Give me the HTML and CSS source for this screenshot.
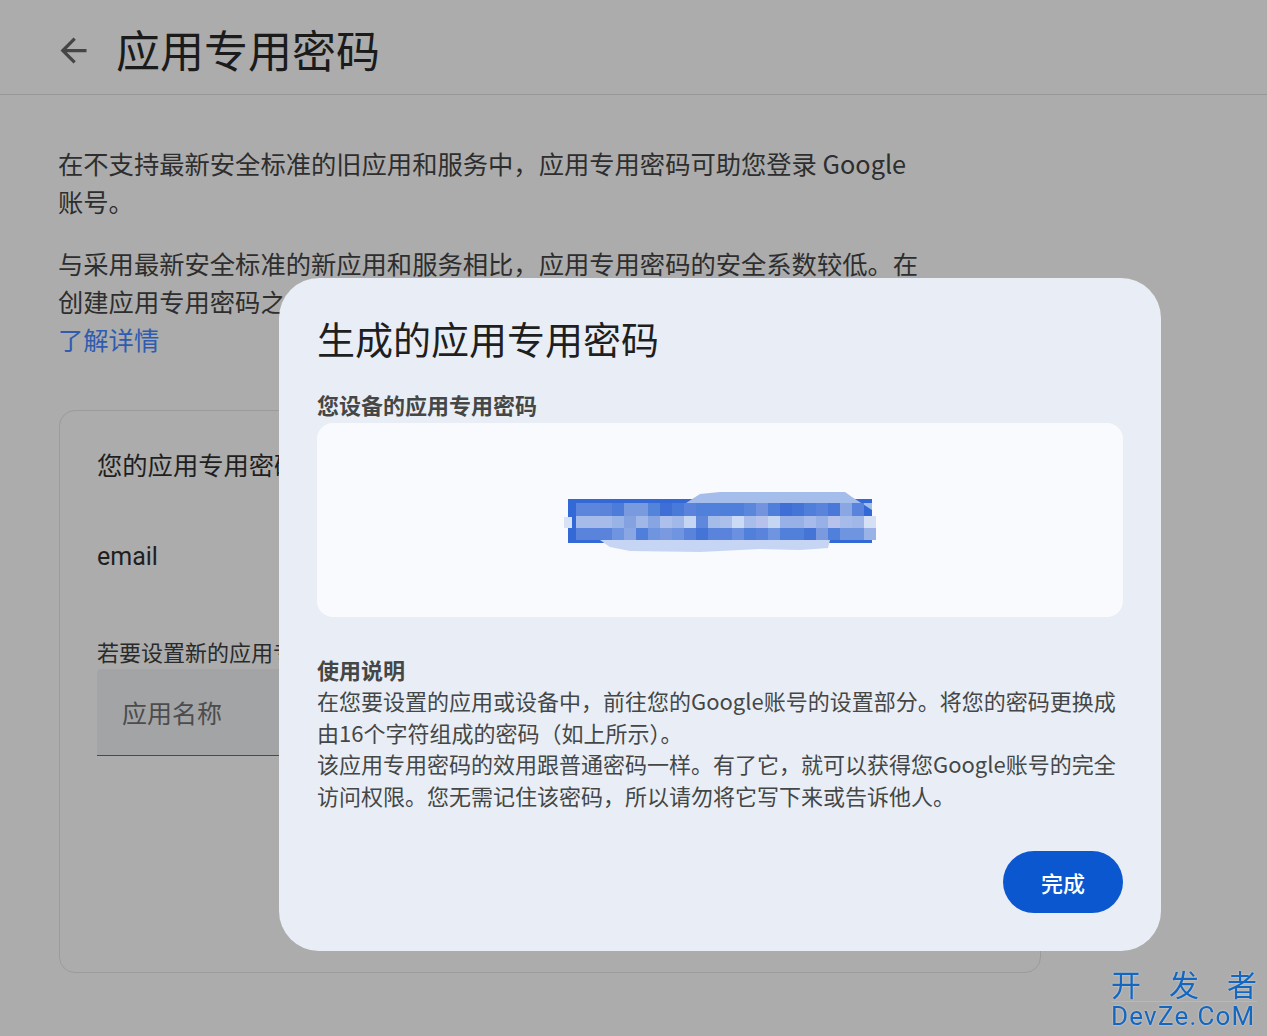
FILE: index.html
```html
<!DOCTYPE html>
<html lang="zh-CN">
<head>
<meta charset="utf-8">
<title>应用专用密码</title>
<link rel="stylesheet" href="styles.css">
</head>
<body>
<header class="topbar">
  <button class="back" aria-label="返回">
    <svg viewBox="0 0 24 24"><path d="M20 11H7.83l5.59-5.59L12 4l-8 8 8 8 1.41-1.41L7.83 13H20v-2z"/></svg>
  </button>
  <h1 class="page-title">应用专用密码</h1>
</header>

<main class="content">
  <p class="intro first">在不支持最新安全标准的旧应用和服务中，应用专用密码可助您登录 Google 账号。</p>
  <p class="intro">与采用最新安全标准的新应用和服务相比，应用专用密码的安全系数较低。在创建应用专用密码之前，请确认您的应用确实需要它才能登录。<a class="learn" href="#">了解详情</a></p>

  <section class="card">
    <h2 class="card-title">您的应用专用密码</h2>
    <div class="app-row">email</div>
    <p class="card-hint">若要设置新的应用专用密码，请在下方输入其名称。</p>
    <div class="field"><span class="placeholder">应用名称</span></div>
  </section>
</main>

<div class="dialog" role="dialog" aria-label="生成的应用专用密码">
  <h2 class="dialog-title">生成的应用专用密码</h2>
  <div class="dialog-sub">您设备的应用专用密码</div>
  <div class="secret">
    <svg class="secret-blur" width="324" height="68" viewBox="0 0 324 68">
      <rect x="10" y="13" width="304" height="44" fill="#3369d6"/>
      <polygon points="128,17 142,8 162,6 287,6 294,11 314,24 314,17" fill="#a5bdea"/>
      <polygon points="42,54 52,61 72,65 142,66 202,63 242,64 270,62 272,54" fill="#c6d5f3"/>
      <rect x="6" y="31" width="8" height="11" fill="#d8e2f6"/>
      <g>
        <rect x="18" y="17" width="12" height="13" fill="#5b86dc"/>
        <rect x="30" y="17" width="12" height="13" fill="#5b86dc"/>
        <rect x="42" y="17" width="12" height="13" fill="#5a83d9"/>
        <rect x="54" y="17" width="12" height="13" fill="#4c7bd9"/>
        <rect x="66" y="17" width="12" height="13" fill="#7a9ae0"/>
        <rect x="78" y="17" width="12" height="13" fill="#7a9ae0"/>
        <rect x="90" y="17" width="12" height="13" fill="#5484da"/>
        <rect x="102" y="17" width="12" height="13" fill="#3f6fd6"/>
        <rect x="114" y="17" width="12" height="13" fill="#4a7ad9"/>
        <rect x="126" y="17" width="12" height="13" fill="#5a84db"/>
        <rect x="138" y="17" width="12" height="13" fill="#5080d9"/>
        <rect x="150" y="17" width="12" height="13" fill="#5080d9"/>
        <rect x="162" y="17" width="12" height="13" fill="#4f7fda"/>
        <rect x="174" y="17" width="12" height="13" fill="#4f7fda"/>
        <rect x="186" y="17" width="12" height="13" fill="#5a86dc"/>
        <rect x="198" y="17" width="12" height="13" fill="#7393df"/>
        <rect x="210" y="17" width="12" height="13" fill="#4f7fda"/>
        <rect x="222" y="17" width="12" height="13" fill="#3f6fd6"/>
        <rect x="234" y="17" width="12" height="13" fill="#4574d7"/>
        <rect x="246" y="17" width="12" height="13" fill="#4f7fda"/>
        <rect x="258" y="17" width="12" height="13" fill="#5a84db"/>
        <rect x="270" y="17" width="12" height="13" fill="#4a78d8"/>
        <rect x="282" y="17" width="12" height="13" fill="#8aa6e3"/>
        <rect x="294" y="17" width="12" height="13" fill="#5a84db"/>
      </g>
      <g>
        <rect x="18" y="30" width="12" height="12" fill="#a6bbe9"/>
        <rect x="30" y="30" width="12" height="12" fill="#a6bbe9"/>
        <rect x="42" y="30" width="12" height="12" fill="#a6bbe9"/>
        <rect x="54" y="30" width="12" height="12" fill="#9ab3e7"/>
        <rect x="66" y="30" width="12" height="12" fill="#85a2e0"/>
        <rect x="78" y="30" width="12" height="12" fill="#a0b7e8"/>
        <rect x="90" y="30" width="12" height="12" fill="#87a5e2"/>
        <rect x="102" y="30" width="12" height="12" fill="#acc0eb"/>
        <rect x="114" y="30" width="12" height="12" fill="#a2b8e8"/>
        <rect x="126" y="30" width="12" height="12" fill="#c5d6f3"/>
        <rect x="138" y="30" width="12" height="12" fill="#5f88dc"/>
        <rect x="150" y="30" width="12" height="12" fill="#a5bbe9"/>
        <rect x="162" y="30" width="12" height="12" fill="#aac0eb"/>
        <rect x="174" y="30" width="12" height="12" fill="#cbdbf5"/>
        <rect x="186" y="30" width="12" height="12" fill="#a8bde9"/>
        <rect x="198" y="30" width="12" height="12" fill="#b6c2ec"/>
        <rect x="210" y="30" width="12" height="12" fill="#c5d6f3"/>
        <rect x="222" y="30" width="12" height="12" fill="#97b0e6"/>
        <rect x="234" y="30" width="12" height="12" fill="#97b0e6"/>
        <rect x="246" y="30" width="12" height="12" fill="#a6bbe9"/>
        <rect x="258" y="30" width="12" height="12" fill="#97b0e6"/>
        <rect x="270" y="30" width="12" height="12" fill="#b6c2ec"/>
        <rect x="282" y="30" width="12" height="12" fill="#a6bbe9"/>
        <rect x="294" y="30" width="12" height="12" fill="#a0b7e8"/>
        <rect x="306" y="30" width="12" height="12" fill="#d5e0f5"/>
      </g>
      <g>
        <rect x="18" y="42" width="12" height="12" fill="#5a84db"/>
        <rect x="30" y="42" width="12" height="12" fill="#5a84db"/>
        <rect x="42" y="42" width="12" height="12" fill="#5a84db"/>
        <rect x="54" y="42" width="12" height="12" fill="#6f95e0"/>
        <rect x="66" y="42" width="12" height="12" fill="#8aa6e3"/>
        <rect x="78" y="42" width="12" height="12" fill="#4f7fda"/>
        <rect x="90" y="42" width="12" height="12" fill="#6f95e0"/>
        <rect x="102" y="42" width="12" height="12" fill="#7a99de"/>
        <rect x="114" y="42" width="12" height="12" fill="#6f95e0"/>
        <rect x="126" y="42" width="12" height="12" fill="#5a84db"/>
        <rect x="138" y="42" width="12" height="12" fill="#4574d7"/>
        <rect x="150" y="42" width="12" height="12" fill="#5a84db"/>
        <rect x="162" y="42" width="12" height="12" fill="#5a84db"/>
        <rect x="174" y="42" width="12" height="12" fill="#6a90df"/>
        <rect x="186" y="42" width="12" height="12" fill="#5080d9"/>
        <rect x="198" y="42" width="12" height="12" fill="#5a84db"/>
        <rect x="210" y="42" width="12" height="12" fill="#6f95e0"/>
        <rect x="222" y="42" width="12" height="12" fill="#5080d9"/>
        <rect x="234" y="42" width="12" height="12" fill="#5080d9"/>
        <rect x="246" y="42" width="12" height="12" fill="#4574d7"/>
        <rect x="258" y="42" width="12" height="12" fill="#7a99de"/>
        <rect x="270" y="42" width="12" height="12" fill="#5080d9"/>
        <rect x="282" y="42" width="12" height="12" fill="#6f95e0"/>
        <rect x="294" y="42" width="12" height="12" fill="#6f95e0"/>
        <rect x="306" y="42" width="12" height="12" fill="#9ab3e7"/>
      </g>
    </svg>
  </div>
  <div class="howto">
    <div class="howto-title">使用说明</div>
    <p>在您要设置的应用或设备中，前往您的Google账号的设置部分。将您的密码更换成由16个字符组成的密码（如上所示）。</p>
    <p>该应用专用密码的效用跟普通密码一样。有了它，就可以获得您Google账号的完全访问权限。您无需记住该密码，所以请勿将它写下来或告诉他人。</p>
  </div>
  <div class="dialog-actions"><button class="done">完成</button></div>
</div>

<div class="watermark">
  <div class="wm-cn"><span>开</span><span>发</span><span>者</span></div>
  <div class="wm-en">DevZe.CoM</div>
</div>
</body>
</html>
```

FILE: styles.css
```css
* { box-sizing: border-box; }

html, body { margin: 0; }

body {
  width: 1267px;
  height: 1036px;
  overflow: hidden;
  background: #acacac;
  font-family: "Noto Sans CJK SC", "Noto Sans", sans-serif;
  color: #2f2f2f;
}

/* header */
.topbar {
  height: 95px;
  padding: 3px 0 0 54px;
  border-bottom: 1px solid #979797;
  display: flex;
  align-items: center;
  gap: 23px;
}

.back {
  width: 39px;
  height: 39px;
  margin-top: 3px;
  padding: 0;
  border: 0;
  background: none;
  display: flex;
}

.back svg {
  width: 39px;
  height: 39px;
  fill: #454545;
}

.page-title {
  margin: 0;
  font-size: 44px;
  font-weight: 400;
  line-height: 56px;
  color: #1b1b1b;
}

/* content */
.content { padding-left: 58px; }

.intro {
  margin: 24px 0 0;
  width: 862px;
  font-size: 25.3px;
  line-height: 38px;
  color: #2e2e2e;
}

.intro.first { margin-top: 48.6px; }

.learn {
  display: block;
  color: #2f5cb0;
  text-decoration: none;
}

.card {
  margin: 52px 0 0 1px;
  width: 982px;
  height: 563px;
  padding: 34px 37px 0;
  border: 1px solid #9b9b9b;
  border-radius: 16px;
}

.card-title {
  margin: 0;
  font-size: 25.3px;
  font-weight: 400;
  line-height: 38px;
  color: #1f1f1f;
}

.app-row {
  margin-top: 55px;
  font-family: Roboto, "Noto Sans", sans-serif;
  font-size: 25px;
  line-height: 38px;
  color: #1f1f1f;
}

.card-hint {
  margin: 59px 0 0;
  font-size: 22px;
  line-height: 32px;
  color: #2a2a2a;
}

.field {
  margin-top: 2px;
  height: 87px;
  padding-left: 25px;
  display: flex;
  align-items: center;
  background: #a3a4a6;
  border-bottom: 1px solid #4a4a4a;
  border-radius: 4px 4px 0 0;
  font-size: 25px;
  color: #4c4c4c;
}

/* dialog */
.dialog {
  position: fixed;
  left: 279px;
  top: 278px;
  width: 882px;
  padding: 36px 38px 38px;
  background: #e9eef6;
  border-radius: 40px;
}

.dialog-title {
  margin: 0;
  font-size: 38px;
  font-weight: 400;
  line-height: 48px;
  color: #1f1f1f;
}

.dialog-sub {
  margin-top: 27px;
  font-size: 22px;
  font-weight: 700;
  line-height: 30px;
  color: #444746;
}

.secret {
  margin-top: 4px;
  height: 194px;
  background: #f8fafd;
  border-radius: 16px;
  display: flex;
  align-items: center;
  justify-content: center;
}

.secret-blur { display: block; }

.howto {
  margin-top: 36px;
  font-size: 22px;
  line-height: 31.5px;
  color: #444746;
}

.howto-title {
  font-weight: 700;
  line-height: 32px;
}

.howto p { margin: 0; }

.dialog-actions {
  margin-top: 40px;
  display: flex;
  justify-content: flex-end;
}

.done {
  width: 120px;
  height: 62px;
  border: 0;
  border-radius: 31px;
  background: #0b57d0;
  color: #ffffff;
  font-family: inherit;
  font-size: 22px;
  font-weight: 500;
}

/* watermark */
.watermark {
  position: fixed;
  left: 1111px;
  top: 967px;
  width: 146px;
  color: #1467c0;
  text-shadow: 0 0 2px rgba(255, 255, 255, 0.6);
}

.wm-cn {
  height: 35px;
  padding-bottom: 2px;
  border-bottom: 1px solid #8ec4ec;
  display: flex;
  justify-content: space-between;
  font-size: 30px;
  line-height: 32px;
}

.wm-en {
  margin-top: 2px;
  font-family: Roboto, "Noto Sans", sans-serif;
  font-size: 26px;
  line-height: 24px;
  letter-spacing: 1.2px;
  white-space: nowrap;
}
```
